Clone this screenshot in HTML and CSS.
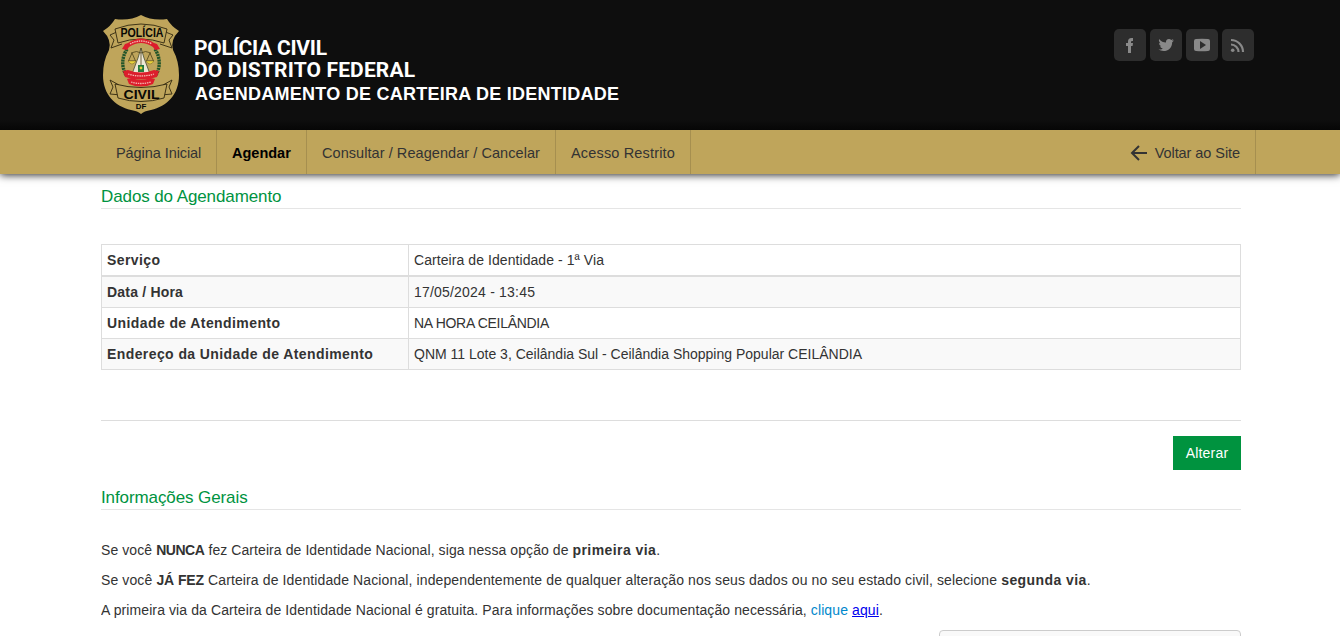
FILE: index.html
```html
<!DOCTYPE html>
<html lang="pt-BR">
<head>
<meta charset="utf-8">
<title>Agendamento de Carteira de Identidade</title>
<link rel="stylesheet" href="styles.css">
</head>
<body>
<header class="header">
  <div class="brand">
    <svg class="badge" viewBox="0 0 76 100" width="76" height="100">
      <path fill="#bfa55b" d="M12 4Q27 6 38 0Q49 6 64 4Q68 11 76 16Q67 25 70 35Q76 46 76 60C76 80 64 91 48 95Q41 96 38 99Q35 96 28 95C12 91 0 80 0 60Q0 46 6 35Q9 25 0 16Q8 11 12 4Z"/>
      <g fill="#bfa55b" stroke="#30270f" stroke-width=".9" stroke-linejoin="round">
        <path d="M16 16L7 20L11 25L8 33L19 29M60 16L70 20L66 25L69 33L57 29"/>
        <path d="M12 14Q38 4 64 14L61 28Q38 20 15 28Z"/>
        <path d="M16 70L7 65L10 72L7 79L18 80M60 70L69 65L66 72L69 79L58 80"/>
        <path d="M12 69Q38 76 64 69L61 83Q38 90 15 83Z"/>
      </g>
      <path d="M24 34Q16 47 23 60M52 34Q60 47 53 60" fill="none" stroke="#23552a" stroke-width="3.400" stroke-dasharray="2.200 .6"/>
      <path d="M38 33L41 43L47 59H29L35 43Z" fill="#eee8d5" stroke="#343b25" stroke-width=".7"/>
      <path d="M28 38Q34 35 38 38Q42 35 48 38M29 38L25.500 46H32.500ZM47 38L43.500 46H50.500ZM38 33V57" fill="none" stroke="#4e421a" stroke-width=".8"/>
      <path d="M25 46H33Q29 52 25 46M43 46H51Q47 52 43 46" fill="#e9d33b" stroke="#6b5a18" stroke-width=".4"/>
      <rect x="35" y="50" width="6" height="7" fill="#247b3d"/><circle cx="38" cy="53" r="1.400" fill="#e9d33b"/>
      <path d="M19 34L22 29L25 28Q38 19 51 28L54 29L57 34L52 35L50 32Q38 24 26 32L24 35Z" fill="#dc1e2c"/>
      <path d="M20 56L25 55Q38 60 51 55L56 56L54 62Q38 67 22 62ZM24 64L28 63Q38 67 48 63L52 64L50 69Q38 74 26 69Z" fill="#dc1e2c"/>
      <path d="M27 29Q38 23 49 29M25 59Q38 63 51 59M28 67Q38 70 48 67" fill="none" stroke="#f4b7b0" stroke-width="1.300" stroke-dasharray="1.500 .8"/>
      <g font-family="Liberation Sans, sans-serif" font-weight="700" fill="#090804">
        <text x="17.500" y="21.800" font-size="12" textLength="43" lengthAdjust="spacingAndGlyphs">POLÍCIA</text>
        <text x="20.500" y="83.500" font-size="12" textLength="36" lengthAdjust="spacingAndGlyphs">CIVIL</text>
        <text x="32.800" y="94" font-size="8" textLength="10.500" lengthAdjust="spacingAndGlyphs">DF</text>
      </g>
    </svg>
    <div class="titles">
      <div class="org"><span class="org-a">POLÍCIA CIVIL</span><span class="org-b">DO DISTRITO FEDERAL</span></div>
      <div class="system">AGENDAMENTO DE CARTEIRA DE IDENTIDADE</div>
    </div>
  </div>
  <div class="social">
    <a><svg viewBox="0 0 32 32"><path d="M14 24V17h-2v-3h2v-1.500q0-3.500 3.500-3.500H19v3h-1q-1 0-1 1V14h2l-.4 3H17v7z"/></svg></a>
    <a><svg viewBox="0 0 32 32"><path d="M9 10q3 3.500 7 3.600q-.3-3.600 3-3.600q1.400 0 2.200.9l2.200-.8-1.300 1.700 1.900-.4-1.800 1.800C22 19 18.500 22 13.500 22q-3 0-5-1.400 2.800.1 4.300-1.200-2.200-.3-2.800-2.200h1.300q-2.300-.8-2.400-3.200l1.400.4Q8.200 12.700 9 10z"/></svg></a>
    <a><svg viewBox="0 0 32 32"><path fill-rule="evenodd" d="M10 10Q16 9.300 22 10Q24 10 24 12V20Q24 22 22 22Q16 22.700 10 22Q8 22 8 20V12Q8 10 10 10ZM14 12V20L20 16Z"/></svg></a>
    <a><svg viewBox="0 0 32 32"><circle cx="10.700" cy="21.300" r="1.800"/><path fill="none" stroke="#898989" stroke-width="2.200" d="M9 15.500A7.500 7.500 0 0 1 16.500 23M9 11A12 12 0 0 1 21 23"/></svg></a>
  </div>
</header>
<nav class="nav">
  <a class="n1">Página Inicial</a>
  <a class="n2">Agendar</a>
  <a class="n3">Consultar / Reagendar / Cancelar</a>
  <a class="n4">Acesso Restrito</a>
  <a class="back"><svg width="18" height="16" viewBox="0 0 18 16"><path d="M9 1L2 8L9 15M2 8H17" fill="none" stroke="#333" stroke-width="2"/></svg><span>Voltar ao Site</span></a>
</nav>
<main class="content">
  <h2>Dados do Agendamento</h2>
  <table class="data">
    <tr class="first"><th>Serviço</th><td>Carteira de Identidade - 1ª Via</td></tr>
    <tr><th class="when">Data / Hora</th><td class="date">17/05/2024 - 13:45</td></tr>
    <tr><th>Unidade de Atendimento</th><td class="unit">NA HORA CEILÂNDIA</td></tr>
    <tr><th>Endereço da Unidade de Atendimento</th><td class="address">QNM 11 Lote 3, Ceilândia Sul - Ceilândia Shopping Popular CEILÂNDIA</td></tr>
  </table>
  <div class="actions"><button>Alterar</button></div>
  <h2>Informações Gerais</h2>
  <div class="info">
    <p class="never">Se você <b class="caps">NUNCA</b> fez Carteira de Identidade Nacional, siga nessa opção de <b>primeira via</b>.</p>
    <p class="already">Se você <b class="caps">JÁ FEZ</b> Carteira de Identidade Nacional, independentemente de qualquer alteração nos seus dados ou no seu estado civil, selecione <b>segunda via</b>.</p>
    <p>A primeira via da Carteira de Identidade Nacional é gratuita. Para informações sobre documentação necessária, <span class="cl">clique</span> <a class="link">aqui</a>.</p>
  </div>
  <div class="panel"></div>
</main>
</body>
</html>
```
FILE: styles.css
```css
* { box-sizing: border-box; }
body { margin: 0; background: #fff; color: #333; font: 14px/20px "Liberation Sans", Arial, sans-serif; }
.header { position: relative; z-index: 1; height: 130px; padding: 15px 86px 0 103px; display: flex; justify-content: space-between; background: linear-gradient(#0e0e0e 0 120px, #060606); }
.brand { display: flex; gap: 15px; }
.badge { display: block; }
.titles { padding-top: 22px; color: #fff; font-weight: bold; white-space: nowrap; }
.org { font-family: Roboto, sans-serif; font-size: 21px; line-height: 22px; }
.org span { display: block; }
.org-a { letter-spacing: -.25px; }
.org-b { letter-spacing: .14px; }
.system { padding-left: 1px; margin-top: 2px; font-size: 18px; line-height: 22px; letter-spacing: .25px; }
.social { display: flex; gap: 4px; padding-top: 14px; }
.social a { width: 32px; height: 32px; border-radius: 5px; background: #2d2d2d; }
.social svg { display: block; fill: #898989; }
.nav { position: relative; height: 44px; padding: 0 84px 0 101px; display: flex; background: #bfa55b; box-shadow: 0 1px 8px rgba(0,0,0,.85); font-size: 14.5px; }
.nav a { padding: 0 15px; line-height: 46px; border-right: 1px solid #a68f4f; white-space: nowrap; }
.nav .n1 { width: 116px; letter-spacing: -.07px; }
.nav .n2 { width: 90px; color: #000; font-weight: bold; }
.nav .n3 { width: 249px; letter-spacing: .06px; }
.nav .n4 { width: 135px; letter-spacing: .16px; }
.nav .back { margin-left: auto; display: flex; align-items: center; gap: 7px; letter-spacing: -.07px; }
.back svg { margin-top: 1px; }
.back span { padding-top: 1px; line-height: 20px; }
.content { width: 1140px; height: 462px; margin-left: 101px; padding-top: 12px; overflow: hidden; }
h2 { margin: 0; height: 23px; border-bottom: 1px solid #e5e5e5; color: #00933f; font-size: 17px; font-weight: normal; line-height: 21px; letter-spacing: -.1px; }
.data { width: 1140px; margin-top: 35px; border-collapse: collapse; table-layout: fixed; }
.data th, .data td { height: 31px; padding: 5px; border: 1px solid #ddd; text-align: left; }
.data th { width: 307px; letter-spacing: .41px; }
.data td { letter-spacing: .07px; }
.data .when { letter-spacing: .2px; }
.data .date { letter-spacing: .2px; }
.data .unit { letter-spacing: -.3px; }
.data .address { letter-spacing: 0; }
.data .first > * { border-bottom-width: 2px; }
.data tr:nth-child(even) { background: #f9f9f9; }
.actions { margin: 50px 0 17px; padding-top: 15px; border-top: 1px solid #ddd; text-align: right; }
button { display: block; width: 68px; height: 34px; margin-left: auto; padding: 0; border: 0; background: #00933f; color: #fff; font: 14px/20px "Liberation Sans", Arial, sans-serif; letter-spacing: .2px; }
.info { padding-top: 30px; white-space: nowrap; letter-spacing: .1px; }
.info p { margin: 0 0 10px; }
.info .never { letter-spacing: .08px; }
.info .already { letter-spacing: .115px; }
.info b { letter-spacing: .42px; }
.info .caps { letter-spacing: -.1px; }
.never .caps { letter-spacing: -.45px; }
.cl { color: #0088cc; }
.link { color: #0000ee; text-decoration: underline; }
.panel { width: 302px; height: 40px; margin-left: auto; border: 1px solid #ccc; border-radius: 4px; background: #f9f9f9; }
```
